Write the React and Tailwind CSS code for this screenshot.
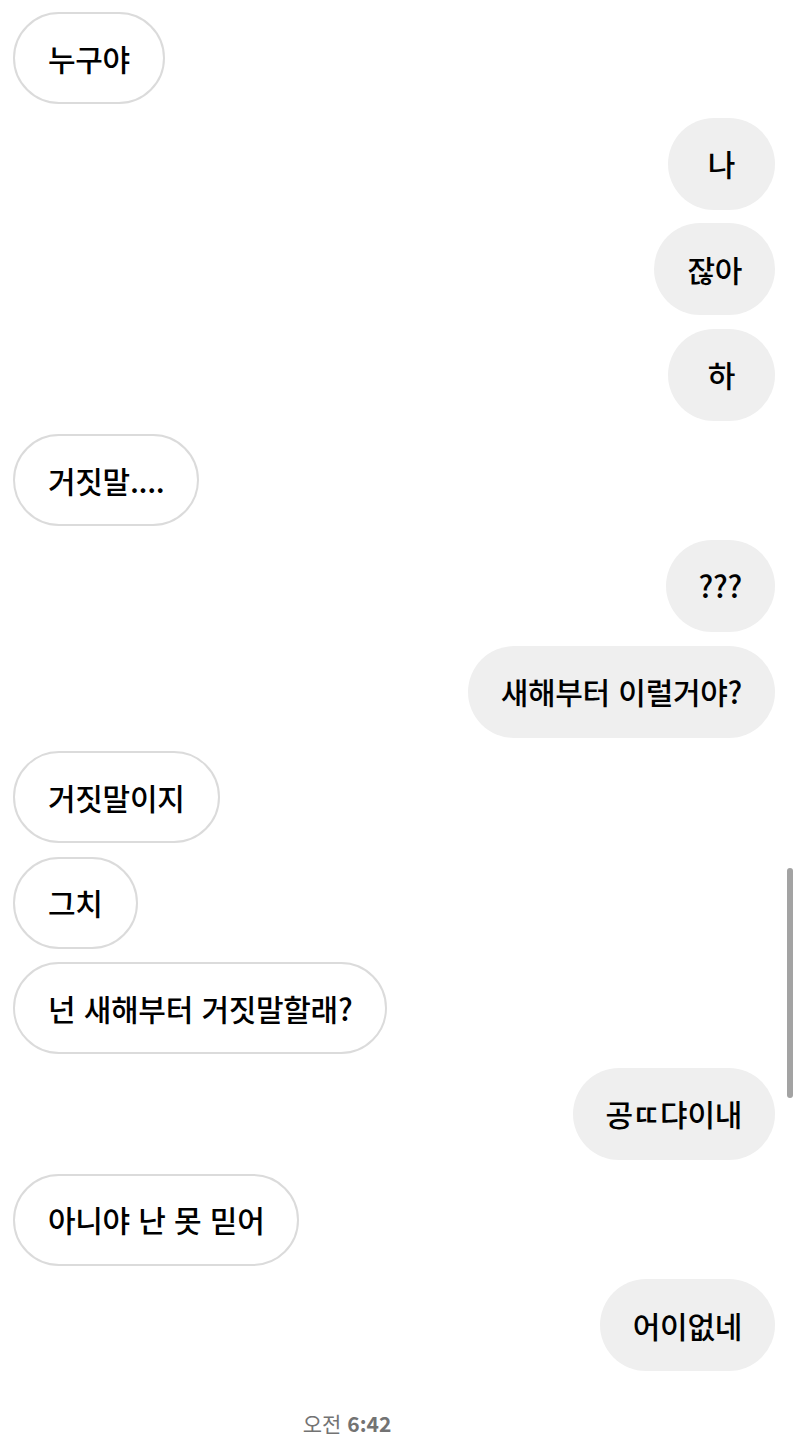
const messages = [
  { me: false, text: "누구야" },
  { me: true, text: "나" },
  { me: true, text: "잖아" },
  { me: true, text: "하" },
  { me: false, text: "거짓말...." },
  { me: true, text: "???" },
  { me: true, text: "새해부터 이럴거야?" },
  { me: false, text: "거짓말이지" },
  { me: false, text: "그치" },
  { me: false, text: "넌 새해부터 거짓말할래?" },
  { me: true, text: "공ㄸ댜이내" },
  { me: false, text: "아니야 난 못 믿어" },
  { me: true, text: "어이없네" },
];

function Bubble({ me, text }) {
  return (
    <div className={`flex ${me ? "justify-end" : "justify-start"}`}>
      <div
        className={`flex h-[92px] min-w-[107px] items-center justify-center whitespace-pre rounded-full px-[33px] text-[30px] font-medium tracking-[-0.3px] text-black [word-spacing:2px] ${
          me ? "bg-[#efefef]" : "border-2 border-[#dbdbdb] bg-white"
        }`}
      >
        {text}
      </div>
    </div>
  );
}

export default function App() {
  return (
    <div
      className="relative h-[1444px] w-[800px] overflow-hidden bg-white"
      style={{ fontFamily: '"Noto Sans CJK KR", "Noto Sans", sans-serif' }}
    >
      <div className="flex flex-col gap-[13.6px] pl-[13px] pr-[25px] pt-[12px]">
        {messages.map((m, i) => (
          <Bubble key={i} me={m.me} text={m.text} />
        ))}
      </div>

      <div className="mt-[42px] flex justify-center pr-[106px] text-[21px] leading-none text-[#737373]">
        <span>오전</span>
        <span className="ml-[6px] font-semibold">6:42</span>
      </div>

      <div className="absolute left-[787px] top-[868px] h-[230px] w-[6px] rounded-full bg-[#a3a3a3]" />
    </div>
  );
}
